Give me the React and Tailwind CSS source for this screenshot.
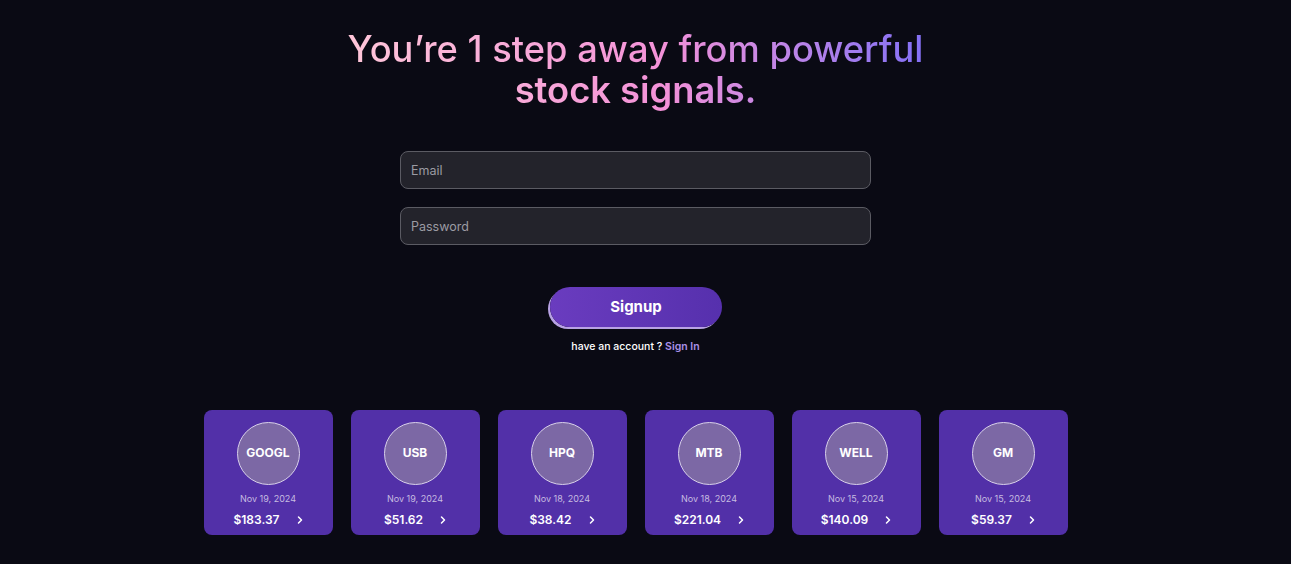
import React from 'react';
import { ChevronRight } from 'lucide-react';

const signals = [
 { symbol: 'GOOGL', date: 'Nov 19, 2024', price: '$183.37' },
 { symbol: 'USB', date: 'Nov 19, 2024', price: '$51.62' },
 { symbol: 'HPQ', date: 'Nov 18, 2024', price: '$38.42' },
 { symbol: 'MTB', date: 'Nov 18, 2024', price: '$221.04' },
 { symbol: 'WELL', date: 'Nov 15, 2024', price: '$140.09' },
 { symbol: 'GM', date: 'Nov 15, 2024', price: '$59.37' },
];

const SignalCard = ({ item }) => (
 <div className="w-[129px] h-[125px] rounded-lg bg-[#5230a8] flex flex-col items-center pt-3">
 <div className="w-[63px] h-[63px] rounded-full bg-[#7c68a5] border border-[#d8d0ea] flex items-center justify-center">
 <span className="text-[12px] font-bold text-white">{item.symbol}</span>
 </div>
 <p className="mt-[9px] text-[9px] text-[#c6bce0] leading-none">{item.date}</p>
 <div className="mt-[11px] flex items-center gap-[14px] pl-[3px]">
 <span className="text-[12px] font-semibold text-white leading-none">{item.price}</span>
 <ChevronRight className="w-[12px] h-[12px] text-white" strokeWidth={3} />
 </div>
 </div>
);

export default function App() {
 return (
 <div className="min-h-[564px] bg-[#0a0a14] font-['Inter',sans-serif] pr-[20px]">
 <div className="flex flex-col items-center pt-[29px]">
 <h1 className="text-[36.3px] leading-[41px] text-center bg-gradient-to-r from-[#ffc6d9] via-[#f391d8] via-55% to-[#8470f5] bg-clip-text text-transparent">
 <span className="block font-medium">You’re 1 step away from powerful</span>
 <span className="block font-semibold">stock signals.</span>
 </h1>

 <div className="mt-[40px] w-[471px] flex flex-col gap-[18px]">
 <input
 type="email"
 placeholder="Email"
 className="h-[38px] w-full rounded-lg bg-[#23232b] border border-[#5b5b63] px-[10px] text-[12.5px] text-white placeholder:text-[#9b9ba3] outline-none"
 />
 <input
 type="password"
 placeholder="Password"
 className="h-[38px] w-full rounded-lg bg-[#23232b] border border-[#5b5b63] px-[10px] text-[12.5px] text-white placeholder:text-[#9b9ba3] outline-none"
 />
 </div>

 <button className="mt-[42px] w-[172px] h-[40px] ml-[1px] rounded-full bg-gradient-to-r from-[#6a3cbf] to-[#5630ad] text-white text-[15px] font-bold shadow-[-2px_2px_0_#b8a2e4]">
 Signup
 </button>
 <p className="mt-[12px] text-[10.5px] font-medium text-white">
 have an account ? <span className="text-[#a990e8] font-semibold">Sign In</span>
 </p>

 <div className="mt-[55px] flex gap-[18px]">
 {signals.map((s) => (
 <SignalCard key={s.symbol} item={s} />
 ))}
 </div>
 </div>
 </div>
 );
}
